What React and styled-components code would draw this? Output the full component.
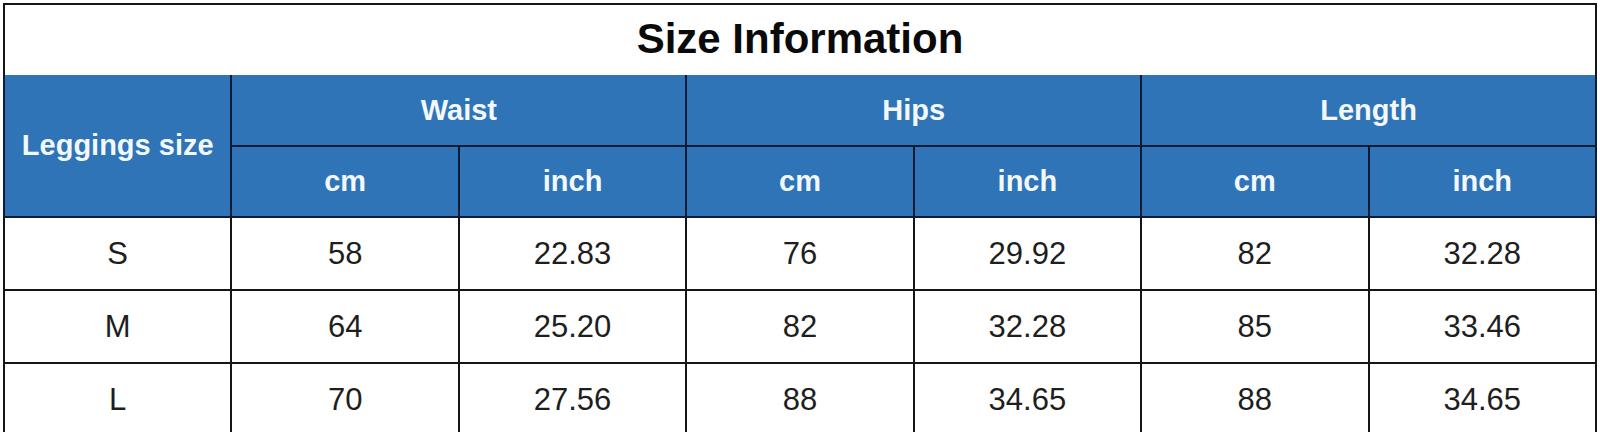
import React from 'react'
import styled, { createGlobalStyle } from 'styled-components'

const GlobalStyle = createGlobalStyle`
    html, body {
        margin: 0;
        padding: 0;
        background: #fff;
        overflow: hidden;
    }
`;

const groups = ['Waist', 'Hips', 'Length']

const rows = [
    ['S', '58', '22.83', '76', '29.92', '82', '32.28'],
    ['M', '64', '25.20', '82', '32.28', '85', '33.46'],
    ['L', '70', '27.56', '88', '34.65', '88', '34.65'],
]

function App() {
    return (
        <Page>
            <GlobalStyle />
            <SizeTable>
                <colgroup>
                    {Array.from({ length: 7 }).map((_, i) => <col key={i} />)}
                </colgroup>
                <thead>
                    <TitleRow>
                        <Title colSpan={7}>Size Information</Title>
                    </TitleRow>
                    <HeadRow>
                        <HeadCell rowSpan={2}>Leggings size</HeadCell>
                        {groups.map(g => (
                            <HeadCell key={g} colSpan={2}>{g}</HeadCell>
                        ))}
                    </HeadRow>
                    <HeadRow>
                        {groups.map(g => (
                            <React.Fragment key={g}>
                                <HeadCell>cm</HeadCell>
                                <HeadCell>inch</HeadCell>
                            </React.Fragment>
                        ))}
                    </HeadRow>
                </thead>
                <tbody>
                    {rows.map(r => (
                        <DataRow key={r[0]}>
                            {r.map((v, i) => <Cell key={i}>{v}</Cell>)}
                        </DataRow>
                    ))}
                </tbody>
            </SizeTable>
        </Page>
    )
}

export default App

const Page = styled.div`
    padding: 3px 0 0 3px;
    width: 1600px;
    height: 432px;
    box-sizing: border-box;
    overflow: hidden;
`;

const SizeTable = styled.table`
    width: 1594px;
    table-layout: fixed;
    border-collapse: collapse;
    border: 2px solid #151515;

    col {
        width: 14.2857%;
    }
`;

const TitleRow = styled.tr`
    height: 71px;
`;

const Title = styled.th`
    border: 2px solid #151515;
    border-bottom: hidden;
    padding: 0 0 2px;
    font-family: "Liberation Sans", Arial, sans-serif;
    font-weight: 700;
    font-size: 42px;
    color: #0a0a0a;
    text-align: center;
`;

const HeadRow = styled.tr`
    height: 71px;
`;

const HeadCell = styled.th`
    background: #2e74b6;
    border: 2px solid #0f1a33;
    padding: 0;
    font-family: "Liberation Sans", Arial, sans-serif;
    font-weight: 700;
    font-size: 29px;
    color: #f2f8fd;
    text-align: center;
`;

const DataRow = styled.tr`
    height: 73px;
`;

const Cell = styled.td`
    border: 2px solid #151515;
    padding: 0;
    font-family: "Liberation Sans", Arial, sans-serif;
    font-size: 31px;
    color: #1e1e1e;
    text-align: center;
`;
